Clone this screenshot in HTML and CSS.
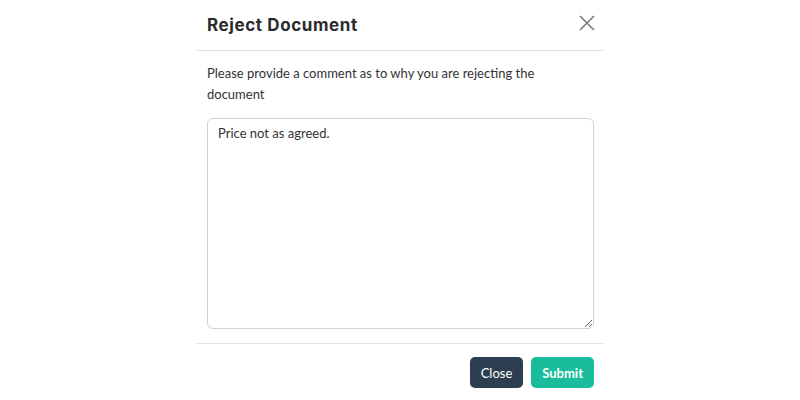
FILE: index.html
```html
<!DOCTYPE html>
<html lang="en">
<head>
    <meta charset="UTF-8">
    <meta name="viewport" content="width=device-width, initial-scale=1.0">
    <title>Reject Document</title>
    <link rel="stylesheet" href="styles.css">
</head>
<body>
    <div class="modal">
        <div class="modal-header">
            <h2 class="modal-title">Reject Document</h2>
            <button class="modal-close" aria-label="Close">
                <svg width="16" height="16" viewBox="0 0 16 16"><path d="M1 1 L15 15 M15 1 L1 15" stroke="#7a7a7a" stroke-width="1.6" fill="none"/></svg>
            </button>
        </div>
        <div class="modal-body">
            <p>Please provide a comment as to why you are rejecting the document</p>
            <textarea class="comment">Price not as agreed.</textarea>
        </div>
        <div class="modal-footer">
            <button class="btn btn-dark">Close</button>
            <button class="btn btn-green">Submit</button>
        </div>
    </div>
</body>
</html>
```

FILE: styles.css
```css
body {
    margin: 0;
    background: #fff;
    font-family: Lato, "Liberation Sans", sans-serif;
    color: #333;
}
.modal {
    width: 406px;
    margin: 0 auto;
}
.modal-header {
    display: flex;
    align-items: center;
    justify-content: space-between;
    height: 50px;
    padding: 0 6px 0 10px;
    border-bottom: 1px solid #dee0e4;
}
.modal-title {
    margin: 0 0 1px;
    font-family: Inter, "Noto Sans", sans-serif;
    font-size: 17px;
    font-weight: 700;
    letter-spacing: 0.6px;
    color: #2a2a2e;
}
.modal-close {
    border: 0;
    background: none;
    padding: 0;
    width: 20px;
    height: 20px;
    display: flex;
    align-items: center;
    justify-content: center;
    margin-top: -4px;
}
.modal-body {
    padding: 12px 9px 14px 10px;
    border-bottom: 1px solid #dee0e4;
}
.modal-body p {
    margin: 0 0 13px;
    font-size: 13px;
    line-height: 21px;
    color: #333;
}
.comment {
    display: block;
    box-sizing: border-box;
    width: 100%;
    height: 211px;
    padding: 4px 10px;
    border: 1px solid #cfd3d8;
    border-radius: 6px;
    font-family: Lato, "Liberation Sans", sans-serif;
    font-size: 13px;
    line-height: 20px;
    color: #333;
}
.modal-footer {
    display: flex;
    justify-content: flex-end;
    gap: 8px;
    padding: 13px 9px 10px 10px;
}
.btn {
    border: 0;
    border-radius: 5px;
    height: 31px;
    padding: 0 11px;
    font-family: Lato, "Liberation Sans", sans-serif;
    font-size: 13px;
    font-weight: 700;
    color: #fff;
}
.btn-dark {
    background: #2c3e50;
    font-weight: 400;
}
.btn-green {
    background: #1abc9c;
}
```
